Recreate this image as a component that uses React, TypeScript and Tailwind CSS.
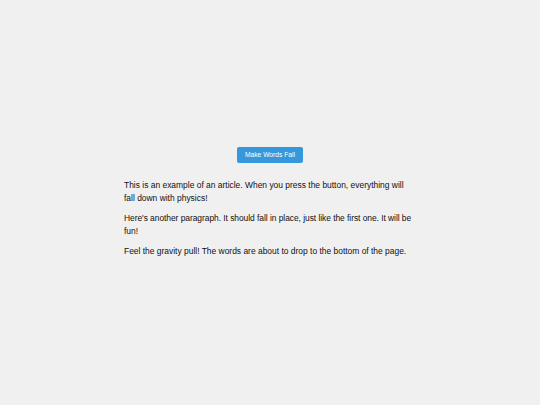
export default function App() {
	return (
		<div className="flex min-h-[405px] flex-col items-center justify-center bg-[#f0f0f0] font-['Liberation_Sans',Arial,sans-serif]">
			<button className="mb-4 h-4 rounded-[2px] bg-[#3498db] px-[8px] text-[6.7px] leading-4 text-white">
				Make Words Fall
			</button>
			<div className="w-[292px] text-[8.45px] leading-[13px] text-[#111]">
				<p className="mb-[7px]">
					This is an example of an article. When you press the button, everything will
					<br />
					fall down with physics!
				</p>
				<p className="mb-[7px]">
					<span className="whitespace-nowrap tracking-[-0.05px]">
						Here's another paragraph. It should fall in place, just like the first one. It will be
					</span>
					<br />
					fun!
				</p>
				<p>Feel the gravity pull! The words are about to drop to the bottom of the page.</p>
			</div>
		</div>
	);
}
